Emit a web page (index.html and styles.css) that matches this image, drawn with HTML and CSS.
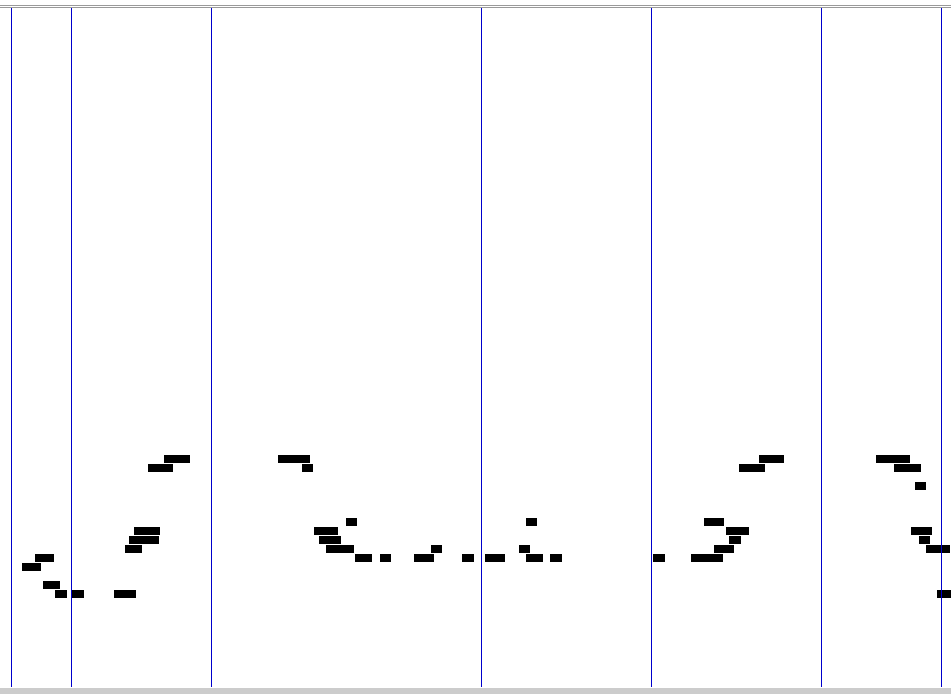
FILE: index.html
```html
<!doctype html>
<html lang="en">
  <head>
    <meta charset="utf-8">
    <meta name="viewport" content="width=device-width, initial-scale=1" />
    <title>Piano roll</title>
    <link rel="stylesheet" href="styles.css">
  </head>
  <body>
    <div class="rule"></div>
    <div class="rule"></div>
    <div id="roll" class="roll"></div>
    <div class="scrollbar"></div>
    <script type="text/javascript">

    const row_height = 9;
    const bars = [11, 71, 211, 481, 651, 821, 941];

    // row 0 is the top pitch in use, sits 447px down the roll
    const notes = [
      [0, 164, 190], [0, 278, 310], [0, 759, 784], [0, 876, 910],
      [1, 148, 173], [1, 302, 313], [1, 739, 765], [1, 894, 921],
      [3, 915, 926],
      [7, 346, 357], [7, 526, 537], [7, 704, 724],
      [8, 134, 160], [8, 314, 338], [8, 726, 749], [8, 911, 932],
      [9, 129, 159], [9, 319, 341], [9, 729, 741], [9, 919, 930],
      [10, 125, 142], [10, 326, 354], [10, 431, 442], [10, 519, 530], [10, 714, 734], [10, 926, 950],
      [11, 35, 54], [11, 355, 372], [11, 380, 391], [11, 414, 434], [11, 462, 474], [11, 485, 505],
      [11, 526, 543], [11, 550, 562], [11, 653, 665], [11, 691, 723],
      [12, 22, 41],
      [14, 43, 60],
      [15, 55, 67], [15, 72, 84], [15, 114, 136], [15, 937, 951],
    ];

    const roll = document.getElementById('roll');

    notes.forEach(function(note) {
      const el = document.createElement('div');
      el.className = 'note';
      el.style.top = (447 + note[0] * row_height) + 'px';
      el.style.left = note[1] + 'px';
      el.style.width = (note[2] - note[1]) + 'px';
      roll.appendChild(el);
    });

    bars.forEach(function(x) {
      const el = document.createElement('div');
      el.className = 'bar';
      el.style.left = x + 'px';
      roll.appendChild(el);
    });

    </script>
  </body>
</html>
```

FILE: styles.css
```css
html, body {
    height: 100%;
}

body {
    margin: 0;
    padding-top: 5px;
    background: #fff;
    overflow: hidden;
    box-sizing: border-box;
    display: flex;
    flex-direction: column;
}

.rule {
    height: 1px;
    margin-bottom: 1px;
    background: #999;
}

.rule + .rule {
    margin-bottom: 0;
}

.roll {
    position: relative;
    flex: 1;
    overflow: hidden;
}

.scrollbar {
    height: 6px;
    background: #ccc;
}

.note {
    position: absolute;
    height: 8px;
    background: #000;
}

.bar {
    position: absolute;
    top: 0;
    bottom: 1px;
    width: 1px;
    background: #0000cc;
}
```
